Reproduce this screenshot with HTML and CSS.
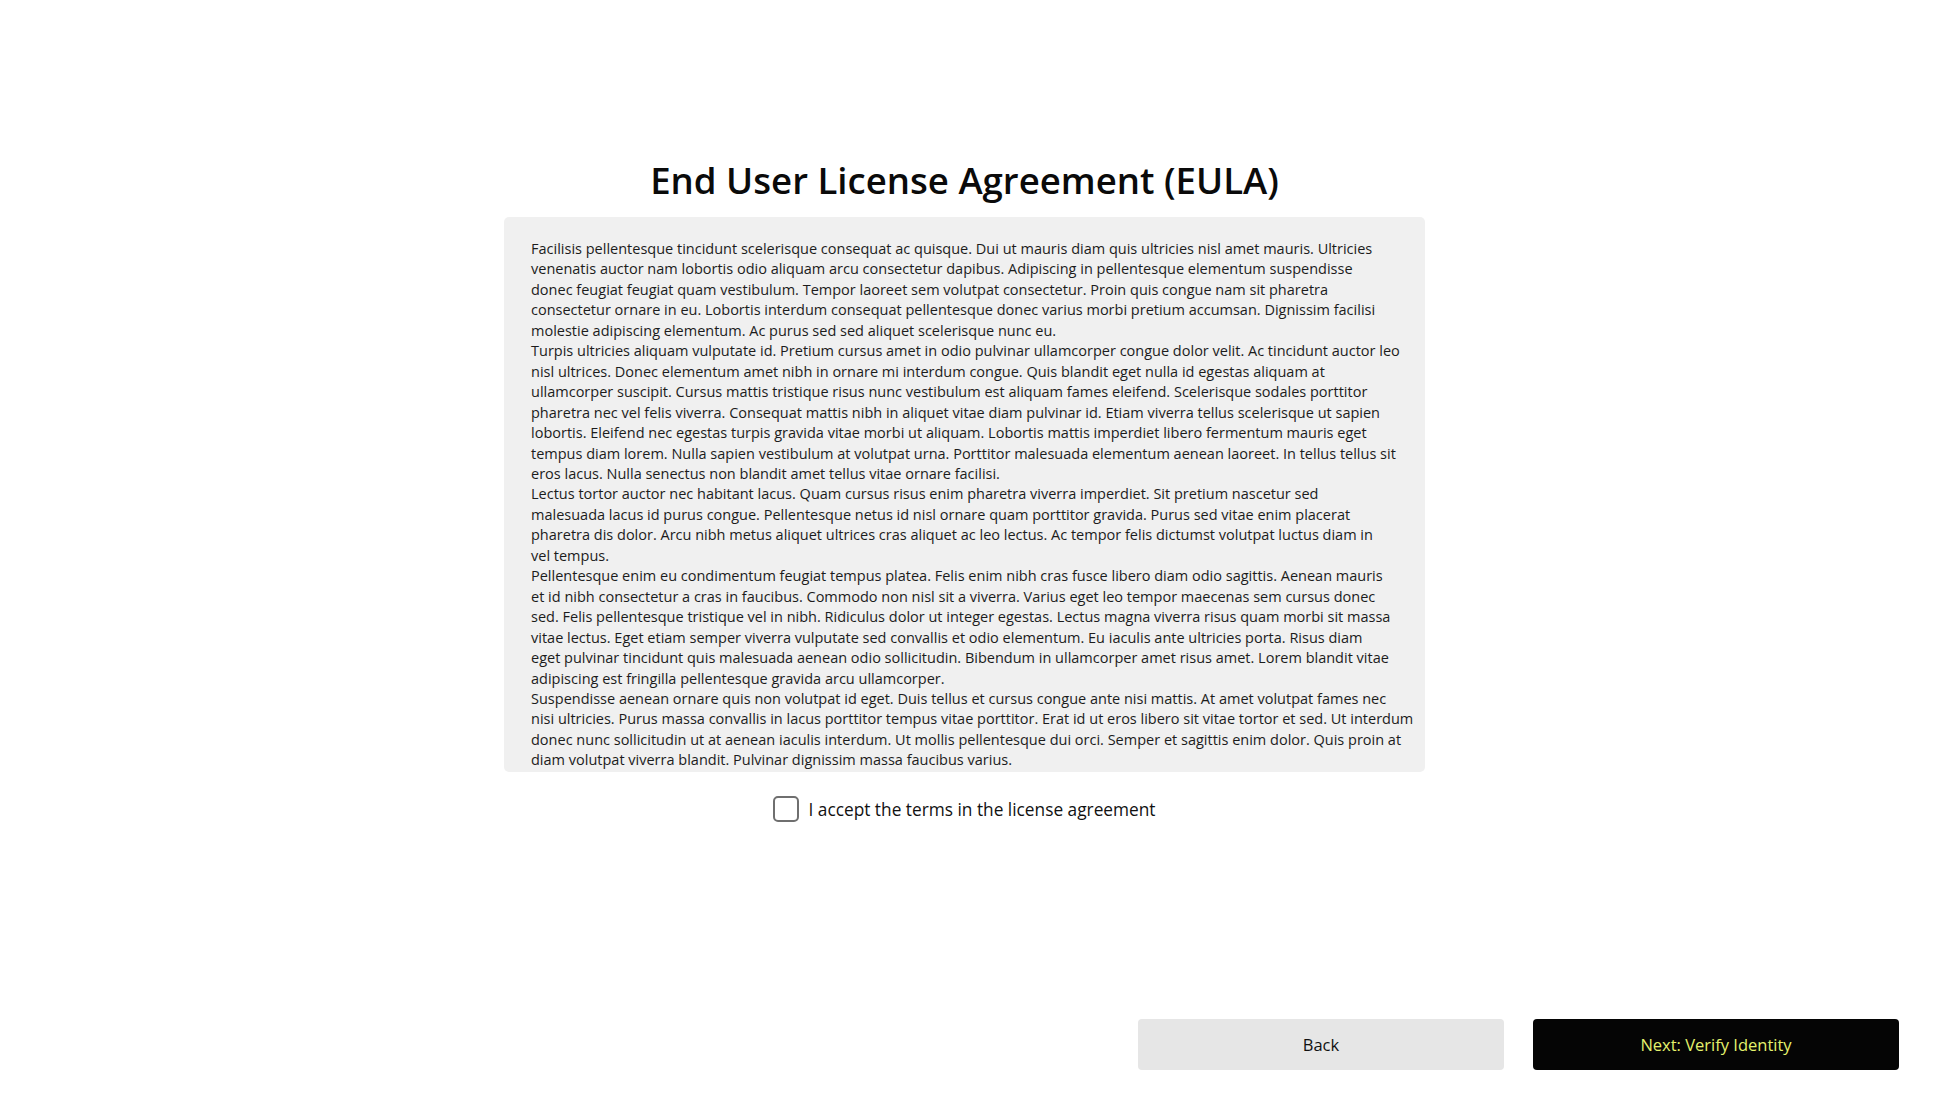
FILE: index.html
```html
<!DOCTYPE html>
<html lang="en">
<head>
<meta charset="utf-8">
<title>End User License Agreement (EULA)</title>
<link rel="stylesheet" href="styles.css">
</head>
<body>
<div class="page">
  <main class="content">
    <h1 class="title">End User License Agreement (EULA)</h1>
    <div class="eula">
      <p>Facilisis pellentesque tincidunt scelerisque consequat ac quisque. Dui ut mauris diam quis ultricies nisl amet mauris. Ultricies<br>
venenatis auctor nam lobortis odio aliquam arcu consectetur dapibus. Adipiscing in pellentesque elementum suspendisse<br>
donec feugiat feugiat quam vestibulum. Tempor laoreet sem volutpat consectetur. Proin quis congue nam sit pharetra<br>
consectetur ornare in eu. Lobortis interdum consequat pellentesque donec varius morbi pretium accumsan. Dignissim facilisi<br>
molestie adipiscing elementum. Ac purus sed sed aliquet scelerisque nunc eu.</p>
      <p>Turpis ultricies aliquam vulputate id. Pretium cursus amet in odio pulvinar ullamcorper congue dolor velit. Ac tincidunt auctor leo<br>
nisl ultrices. Donec elementum amet nibh in ornare mi interdum congue. Quis blandit eget nulla id egestas aliquam at<br>
ullamcorper suscipit. Cursus mattis tristique risus nunc vestibulum est aliquam fames eleifend. Scelerisque sodales porttitor<br>
pharetra nec vel felis viverra. Consequat mattis nibh in aliquet vitae diam pulvinar id. Etiam viverra tellus scelerisque ut sapien<br>
lobortis. Eleifend nec egestas turpis gravida vitae morbi ut aliquam. Lobortis mattis imperdiet libero fermentum mauris eget<br>
tempus diam lorem. Nulla sapien vestibulum at volutpat urna. Porttitor malesuada elementum aenean laoreet. In tellus tellus sit<br>
eros lacus. Nulla senectus non blandit amet tellus vitae ornare facilisi.</p>
      <p>Lectus tortor auctor nec habitant lacus. Quam cursus risus enim pharetra viverra imperdiet. Sit pretium nascetur sed<br>
malesuada lacus id purus congue. Pellentesque netus id nisl ornare quam porttitor gravida. Purus sed vitae enim placerat<br>
pharetra dis dolor. Arcu nibh metus aliquet ultrices cras aliquet ac leo lectus. Ac tempor felis dictumst volutpat luctus diam in<br>
vel tempus.</p>
      <p>Pellentesque enim eu condimentum feugiat tempus platea. Felis enim nibh cras fusce libero diam odio sagittis. Aenean mauris<br>
et id nibh consectetur a cras in faucibus. Commodo non nisl sit a viverra. Varius eget leo tempor maecenas sem cursus donec<br>
sed. Felis pellentesque tristique vel in nibh. Ridiculus dolor ut integer egestas. Lectus magna viverra risus quam morbi sit massa<br>
vitae lectus. Eget etiam semper viverra vulputate sed convallis et odio elementum. Eu iaculis ante ultricies porta. Risus diam<br>
eget pulvinar tincidunt quis malesuada aenean odio sollicitudin. Bibendum in ullamcorper amet risus amet. Lorem blandit vitae<br>
adipiscing est fringilla pellentesque gravida arcu ullamcorper.</p>
      <p>Suspendisse aenean ornare quis non volutpat id eget. Duis tellus et cursus congue ante nisi mattis. At amet volutpat fames nec<br>
nisi ultricies. Purus massa convallis in lacus porttitor tempus vitae porttitor. Erat id ut eros libero sit vitae tortor et sed. Ut interdum<br>
donec nunc sollicitudin ut at aenean iaculis interdum. Ut mollis pellentesque dui orci. Semper et sagittis enim dolor. Quis proin at<br>
diam volutpat viverra blandit. Pulvinar dignissim massa faucibus varius.</p>
    </div>
    <label class="accept">
      <input type="checkbox" class="accept-input">
      <span class="accept-box"></span>
      <span class="accept-text">I accept the terms in the license agreement</span>
    </label>
  </main>
  <footer class="actions">
    <button class="btn btn-back" type="button">Back</button>
    <button class="btn btn-next" type="button">Next: Verify Identity</button>
  </footer>
</div>
</body>
</html>
```
FILE: styles.css
```css
* { box-sizing: border-box; }
html, body { margin: 0; padding: 0; background: #ffffff; }
body {
  font-family: "Open Sans", "Noto Sans", sans-serif;
  color: #111111;
}
.page {
  height: 100vh;
  display: flex;
  flex-direction: column;
}
.content {
  display: flex;
  flex-direction: column;
  align-items: center;
  padding: 160px 17px 0 0;
}
.title {
  margin: 0;
  font-size: 36.6px;
  line-height: 40px;
  font-weight: 600;
  color: #0a0a0a;
}
.eula {
  margin-top: 17px;
  width: 921px;
  height: 555px;
  overflow: hidden;
  background: #f0f0f0;
  border-radius: 5px;
  padding: 22px 4px 0 27px;
}
.eula p {
  margin: 0;
  font-size: 14.5px;
  line-height: 20.45px;
  color: #1c1c1c;
}
.accept {
  margin-top: 24px;
  display: flex;
  align-items: center;
  gap: 9px;
  cursor: pointer;
}
.accept-input { display: none; }
.accept-box {
  width: 26px;
  height: 26px;
  border: 2px solid #6f6f6f;
  border-radius: 5px;
  background: #ffffff;
}
.accept-text {
  font-size: 17.3px;
  color: #111111;
}
.actions {
  margin-top: auto;
  display: flex;
  justify-content: flex-end;
  gap: 29px;
  padding: 0 47px 36px 0;
}
.btn {
  width: 366px;
  height: 51px;
  border: none;
  border-radius: 4px;
  font-family: "Open Sans", "Noto Sans", sans-serif;
  font-size: 16.5px;
  font-weight: 500;
  cursor: pointer;
}
.btn-back { background: #e6e6e6; color: #111111; }
.btn-next { background: #050505; color: #e4f26d; }
```
